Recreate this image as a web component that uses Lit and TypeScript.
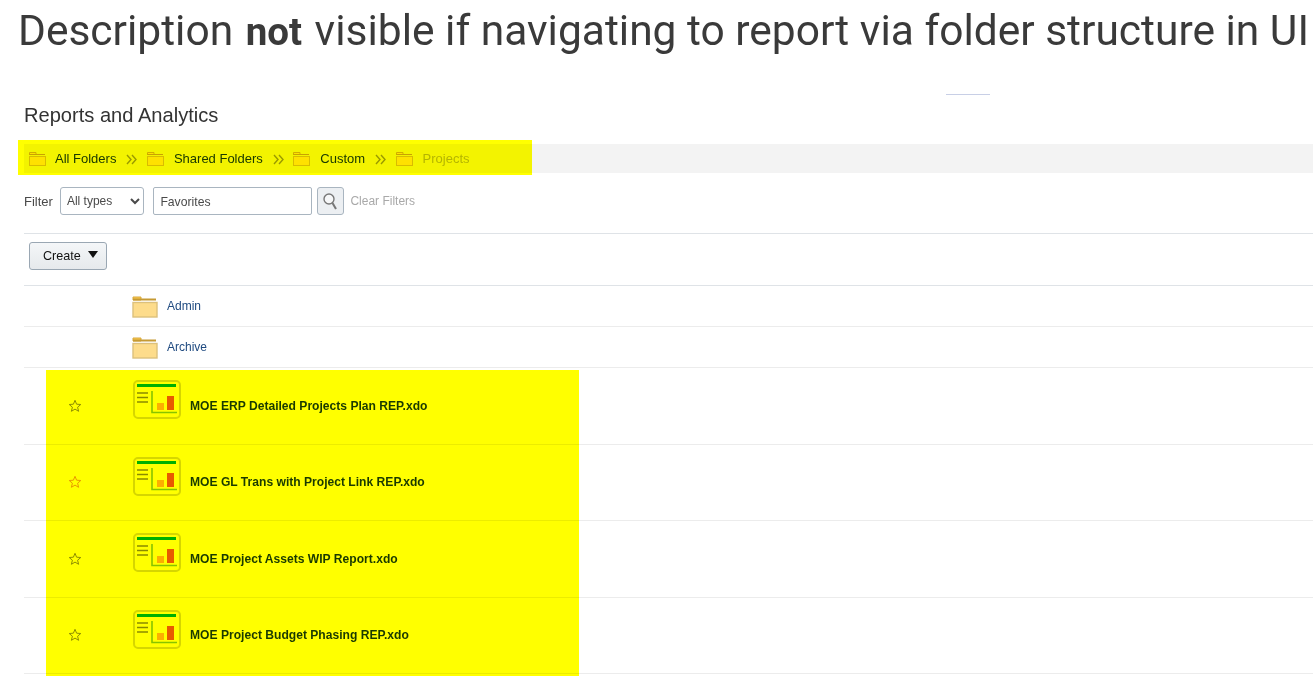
import { LitElement, html, css, svg } from "lit";
import { customElement } from "lit/decorators.js";

const crumbs = [
  { label: "All Folders" },
  { label: "Shared Folders" },
  { label: "Custom" },
  { label: "Projects", current: true },
];

const folders = ["Admin", "Archive"];

const reports = [
  { name: "MOE ERP Detailed Projects Plan REP.xdo" },
  { name: "MOE GL Trans with Project Link REP.xdo", fav: true },
  { name: "MOE Project Assets WIP Report.xdo" },
  { name: "MOE Project Budget Phasing REP.xdo" },
];

const crumbFolder = svg`<svg width="17" height="14" viewBox="0 0 17 14">
  <path d="M.5 3V.5h6.500V3" fill="#ffe17a" stroke="#d2ad3a"/>
  <path d="M.5 2.500h15.500" stroke="#c9a234" fill="none"/>
  <rect x=".5" y="4.500" width="16" height="9" fill="#ffe17a" stroke="#d9bc5e"/>
</svg>`;

const bigFolder = svg`<svg width="26" height="22" viewBox="0 0 26 22">
  <path d="M1 4V1h8v3z" fill="#fbc94e" stroke="#d9a93c" stroke-width="1"/>
  <rect x="1" y="2.500" width="23" height="2" fill="#c59a34"/>
  <rect x="1" y="6.500" width="24" height="14.500" fill="#fddc8b" stroke="#dcc07c" stroke-width="1.400"/>
</svg>`;

const reportIcon = svg`<svg width="48" height="39" viewBox="0 0 48 39">
  <rect x="1" y="1" width="46" height="37" rx="4" fill="#fff" stroke="#d6d6d6" stroke-width="2"/>
  <rect x="4" y="4" width="39" height="3" fill="#00b000"/>
  <path d="M4 13h11M4 17.500h11M4 22h11" stroke="#8a8a50" stroke-width="1.600" fill="none"/>
  <path d="M19 11v21.500h25" stroke="#86c440" stroke-width="1.600" fill="none"/>
  <rect x="24" y="23" width="7" height="7" fill="#fcae14"/>
  <rect x="34" y="16" width="7" height="14" fill="#e85a0c"/>
</svg>`;

const chevrons = svg`<svg class="sep" width="11" height="11" viewBox="0 0 11 11">
  <path d="M1 1l4 4.500-4 4.500M6 1l4 4.500-4 4.500" fill="none" stroke="#999" stroke-width="1.400"/>
</svg>`;

const star = svg`<svg width="14" height="14" viewBox="0 0 14 14">
  <path d="M7 1.300l1.600 3.900 4.200.3-3.200 2.700 1 4.100L7 10.100l-3.600 2.200 1-4.100-3.200-2.700 4.200-.3z" fill="none" stroke="currentColor" stroke-width="1"/>
</svg>`;

@customElement("app-root")
export class AppRoot extends LitElement {
  static styles = css`
    :host {
      display: block;
      position: relative;
      width: 1313px;
      height: 676px;
      overflow: hidden;
      background: #fff;
      font-family: "Liberation Sans", Arial, sans-serif;
    }

    .question {
      margin: 0;
      padding: 6px 0 0 18px;
      height: 46px;
      white-space: nowrap;
      font-family: Roboto, sans-serif;
      font-size: 42.500px;
      line-height: 50px;
      font-weight: 400;
      color: #3a3a3a;
    }
    .question b {
      margin: 0 2px;
      font-weight: 700;
      font-size: 38.500px;
    }

    .tab-line {
      height: 1px;
      width: 44px;
      margin: 42px 0 0 946px;
      background: #c8cfe6;
    }

    .page {
      padding-left: 24px;
    }

    .title {
      margin: 0;
      padding-top: 8px;
      height: 41px;
      font-size: 20.100px;
      line-height: 24px;
      font-weight: 400;
      color: #333;
    }

    .crumbs {
      display: flex;
      align-items: center;
      height: 29px;
      background: #f3f3f3;
      padding-left: 5px;
      font-size: 13px;
      color: #1b3a6b;
    }
    .crumb {
      display: flex;
      align-items: center;
      gap: 10px;
    }
    .crumb:first-child {
      gap: 9px;
    }
    .crumb.current {
      color: #b5b5b5;
    }
    .sep {
      margin: 1px 9.500px 0 10px;
    }

    .filter {
      display: flex;
      align-items: center;
      height: 28px;
      margin-top: 14px;
      font-size: 12px;
      color: #4a4a4a;
    }
    .filter .label {
      font-size: 13px;
    }
    .filter select {
      width: 84px;
      height: 28px;
      margin-left: 7px;
      padding-left: 2px;
      border: 1px solid #a9b5c0;
      border-radius: 3px;
      background: #fff;
      font: 12px "Liberation Sans", Arial, sans-serif;
      color: #4a4a4a;
    }
    .filter input {
      box-sizing: border-box;
      width: 159px;
      height: 28px;
      margin-left: 9.500px;
      padding: 1px 6px 0;
      border: 1px solid #a9b5c0;
      border-radius: 2px;
      font: 12.200px "Liberation Sans", Arial, sans-serif;
      color: #4a4a4a;
    }
    .search {
      display: flex;
      align-items: center;
      justify-content: center;
      width: 27px;
      height: 28px;
      margin-left: 5px;
      border: 1px solid #a9b5c0;
      border-radius: 3px;
      box-sizing: border-box;
      background: #eceff2;
    }
    .clear {
      margin-left: 6px;
      color: #a9a9a9;
    }

    .toolbar {
      margin-top: 18px;
      height: 53px;
      padding: 8px 0 0 5px;
      box-sizing: border-box;
      border-top: 1px solid #dfe3e7;
      border-bottom: 1px solid #dfe3e7;
    }
    .create {
      display: flex;
      align-items: center;
      gap: 7px;
      box-sizing: border-box;
      width: 78px;
      height: 28px;
      padding-left: 13px;
      border: 1px solid #9aa7b3;
      border-radius: 3px;
      background: linear-gradient(#f4f6f8, #e6e9ec);
      font: 12.600px "Liberation Sans", Arial, sans-serif;
      color: #111;
    }
    .create i {
      width: 0;
      height: 0;
      border-left: 5px solid transparent;
      border-right: 5px solid transparent;
      border-top: 7px solid #111;
      margin-top: -3px;
    }

    .row {
      display: grid;
      grid-template-columns: 108px 35px 1fr;
      align-items: center;
      border-bottom: 1px solid #ececec;
      font-size: 12px;
    }
    .row.folder {
      height: 40px;
      color: #1f4a80;
    }
    .row.folder svg {
      grid-column: 2;
      margin-top: 1px;
    }
    .row.folder span {
      grid-column: 3;
    }
    .row.report {
      grid-template-columns: 44px 65px 57px 1fr;
      height: 75.500px;
      font-size: 12.100px;
      font-weight: 700;
      color: #1a3a1a;
    }
    .star {
      grid-column: 2;
      display: flex;
      color: #8f8f3a;
    }
    .star.fav {
      color: #e89b1c;
    }
    .row.report .icon {
      display: flex;
      margin-top: -12px;
    }

    /* marker pen over the screenshot content */
    .mark {
      position: absolute;
      background: #ffff00;
      mix-blend-mode: multiply;
    }
    .mark.crumbs-mark {
      left: 18px;
      top: 140px;
      width: 514px;
      height: 35px;
    }
    .mark.rows-mark {
      left: 46px;
      top: 370px;
      width: 533px;
      height: 306px;
    }
  `;

  render() {
    return html`
      <h1 class="question">Description <b>not</b> visible if navigating to report via folder structure in UI</h1>
      <div class="tab-line"></div>
      <main class="page">
        <h2 class="title">Reports and Analytics</h2>
        <nav class="crumbs">
          ${crumbs.map(
            (c, i) => html`
              ${i > 0 ? chevrons : ""}
              <span class="crumb ${c.current ? "current" : ""}">${crumbFolder}<span>${c.label}</span></span>
            `
          )}
        </nav>
        <div class="filter">
          <span class="label">Filter</span>
          <select><option>All types</option></select>
          <input value="Favorites" />
          <span class="search">
            <svg width="17" height="19" viewBox="0 0 17 19">
              <circle cx="7" cy="7" r="5" fill="#f6f7f8" stroke="#777" stroke-width="1.400"/>
              <path d="M10.500 11l3.500 6" stroke="#777" stroke-width="2" fill="none"/>
            </svg>
          </span>
          <span class="clear">Clear Filters</span>
        </div>
        <div class="toolbar">
          <button class="create">Create <i></i></button>
        </div>
        ${folders.map(
          (f) => html`<div class="row folder">${bigFolder}<span>${f}</span></div>`
        )}
        ${reports.map(
          (r) => html`
            <div class="row report">
              <span class="star ${r.fav ? "fav" : ""}">${star}</span>
              <span class="icon">${reportIcon}</span>
              <span>${r.name}</span>
            </div>
          `
        )}
      </main>
      <div class="mark crumbs-mark"></div>
      <div class="mark rows-mark"></div>
    `;
  }
}
